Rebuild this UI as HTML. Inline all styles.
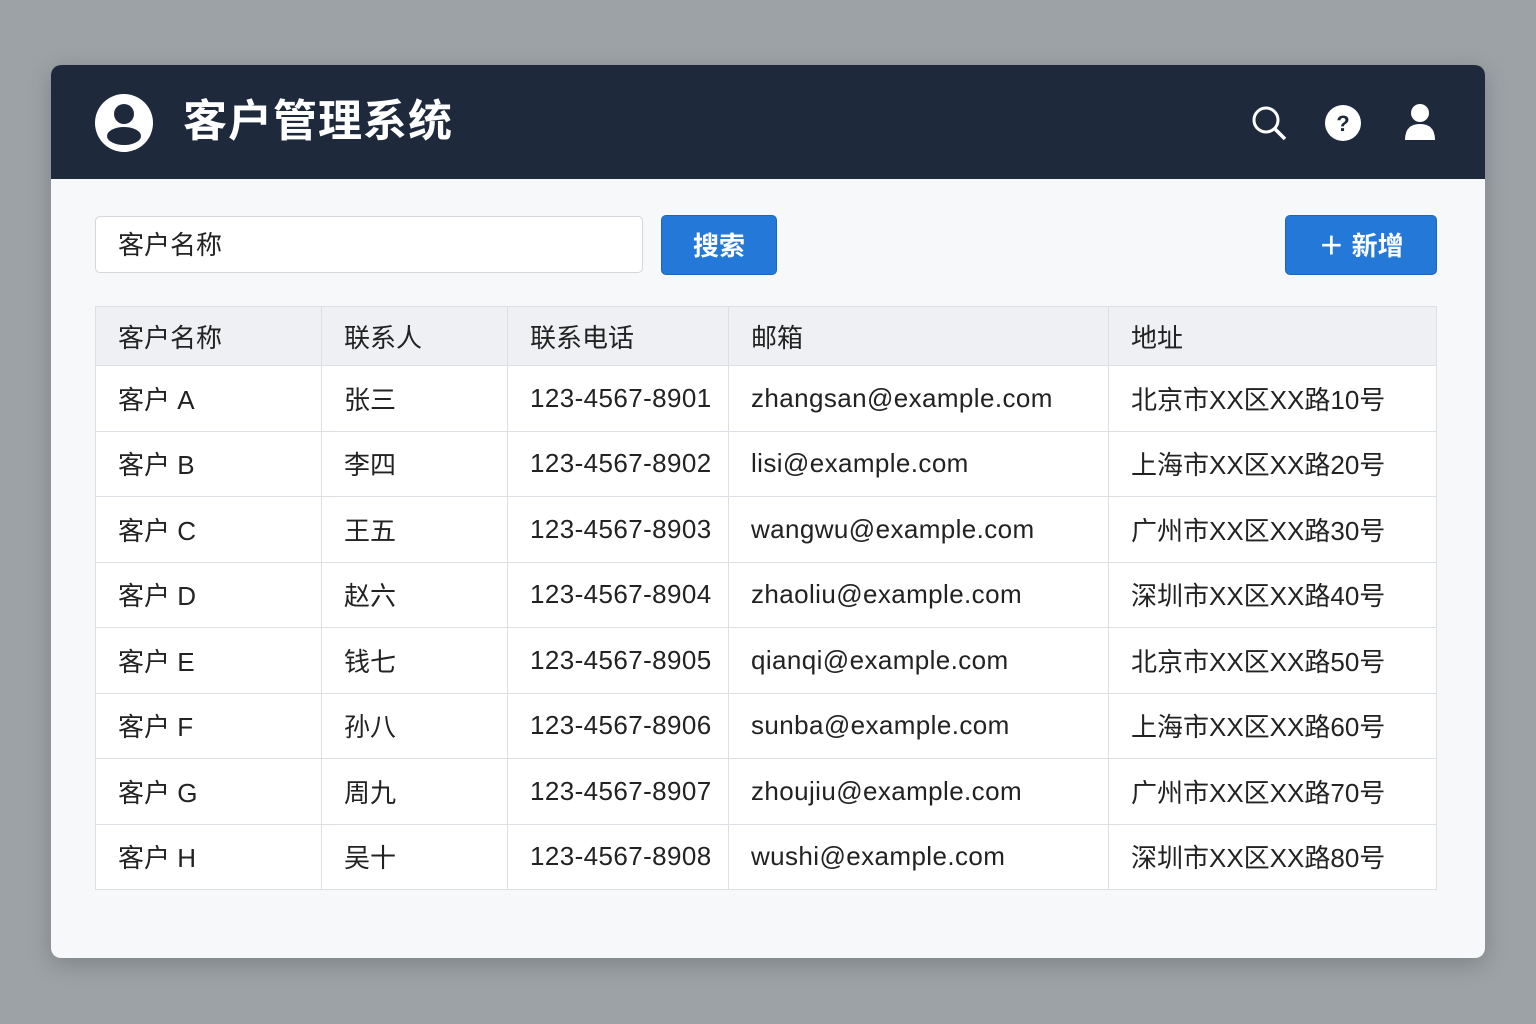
<!DOCTYPE html>
<html><head><meta charset="utf-8"><style>
body{margin:0;width:1536px;height:1024px;background:#9da2a6;font-family:"Liberation Sans","Noto Sans CJK SC",sans-serif;position:relative;overflow:hidden}
.card{position:absolute;left:51px;top:65px;width:1434px;height:893px;background:#f7f8fa;border-radius:10px;overflow:hidden;box-shadow:0 6px 24px rgba(0,0,0,.2)}
.hd{position:absolute;left:0;top:0;width:100%;height:114px;background:#1e2a3b}
.title{position:absolute;left:132px;top:28px;color:#fff;font-size:44px;font-weight:bold;line-height:58px;letter-spacing:1px}
.inp{position:absolute;left:44px;top:151px;height:57px;background:#fff;border:1px solid #d4d7dc;border-radius:5px;font-size:26px;line-height:57px;padding-left:22px;box-sizing:border-box;width:548px;color:#222}
.btn{position:absolute;top:150px;height:60px;background:#2478d8;border:1px solid #1b66be;border-radius:5px;color:#fff;font-size:26px;font-weight:bold;line-height:60px;text-align:center;box-sizing:border-box}
table{position:absolute;left:44px;top:241px;width:1342px;border-collapse:collapse;background:#fff;font-size:26px;color:#222;table-layout:fixed}
td,th{border:1px solid #dcdfe3;text-align:left;font-weight:normal;padding:0 0 0 22px;height:64.5px;white-space:nowrap}
td:nth-child(3),td:nth-child(4){letter-spacing:.4px}
th{background:#eef0f3;height:58px}
</style></head><body>
<div class="card">
<div class="hd">
<svg style="position:absolute;left:44px;top:29px" width="58" height="58" viewBox="0 0 58 58"><circle cx="29" cy="29" r="29" fill="#fff"/><circle cx="29" cy="20" r="10" fill="#1e2a3b"/><ellipse cx="29" cy="42" rx="17" ry="9" fill="#1e2a3b"/></svg>
<div class="title">客户管理系统</div>
<svg style="position:absolute;left:1200px;top:40px" width="38" height="38" viewBox="0 0 38 38"><circle cx="15" cy="15" r="12" fill="none" stroke="#fff" stroke-width="3"/><line x1="24" y1="24" x2="34" y2="34" stroke="#fff" stroke-width="3.5"/></svg>
<svg style="position:absolute;left:1274px;top:40px" width="36" height="36" viewBox="0 0 36 36"><circle cx="18" cy="18" r="18" fill="#fff"/><text x="18" y="26" font-size="22" font-weight="bold" text-anchor="middle" fill="#1e2a3b" font-family="Liberation Sans">?</text></svg>
<svg style="position:absolute;left:1353px;top:38px" width="32" height="38" viewBox="0 0 32 38"><circle cx="16" cy="10" r="9" fill="#fff"/><path d="M1 37 Q1 21 16 21 Q31 21 31 37Z" fill="#fff"/></svg>
</div>
<div class="inp">客户名称</div>
<div class="btn" style="left:610px;width:116px">搜索</div>
<div class="btn" style="left:1234px;width:152px">＋ 新增</div>
<table>
<colgroup><col style="width:226px"><col style="width:186px"><col style="width:221px"><col style="width:380px"><col></colgroup>
<tr><th>客户名称</th><th>联系人</th><th>联系电话</th><th>邮箱</th><th>地址</th></tr>
<tr><td>客户 A</td><td>张三</td><td>123-4567-8901</td><td>zhangsan@example.com</td><td>北京市XX区XX路10号</td></tr>
<tr><td>客户 B</td><td>李四</td><td>123-4567-8902</td><td>lisi@example.com</td><td>上海市XX区XX路20号</td></tr>
<tr><td>客户 C</td><td>王五</td><td>123-4567-8903</td><td>wangwu@example.com</td><td>广州市XX区XX路30号</td></tr>
<tr><td>客户 D</td><td>赵六</td><td>123-4567-8904</td><td>zhaoliu@example.com</td><td>深圳市XX区XX路40号</td></tr>
<tr><td>客户 E</td><td>钱七</td><td>123-4567-8905</td><td>qianqi@example.com</td><td>北京市XX区XX路50号</td></tr>
<tr><td>客户 F</td><td>孙八</td><td>123-4567-8906</td><td>sunba@example.com</td><td>上海市XX区XX路60号</td></tr>
<tr><td>客户 G</td><td>周九</td><td>123-4567-8907</td><td>zhoujiu@example.com</td><td>广州市XX区XX路70号</td></tr>
<tr><td>客户 H</td><td>吴十</td><td>123-4567-8908</td><td>wushi@example.com</td><td>深圳市XX区XX路80号</td></tr>
</table>
</div>
</body></html>
